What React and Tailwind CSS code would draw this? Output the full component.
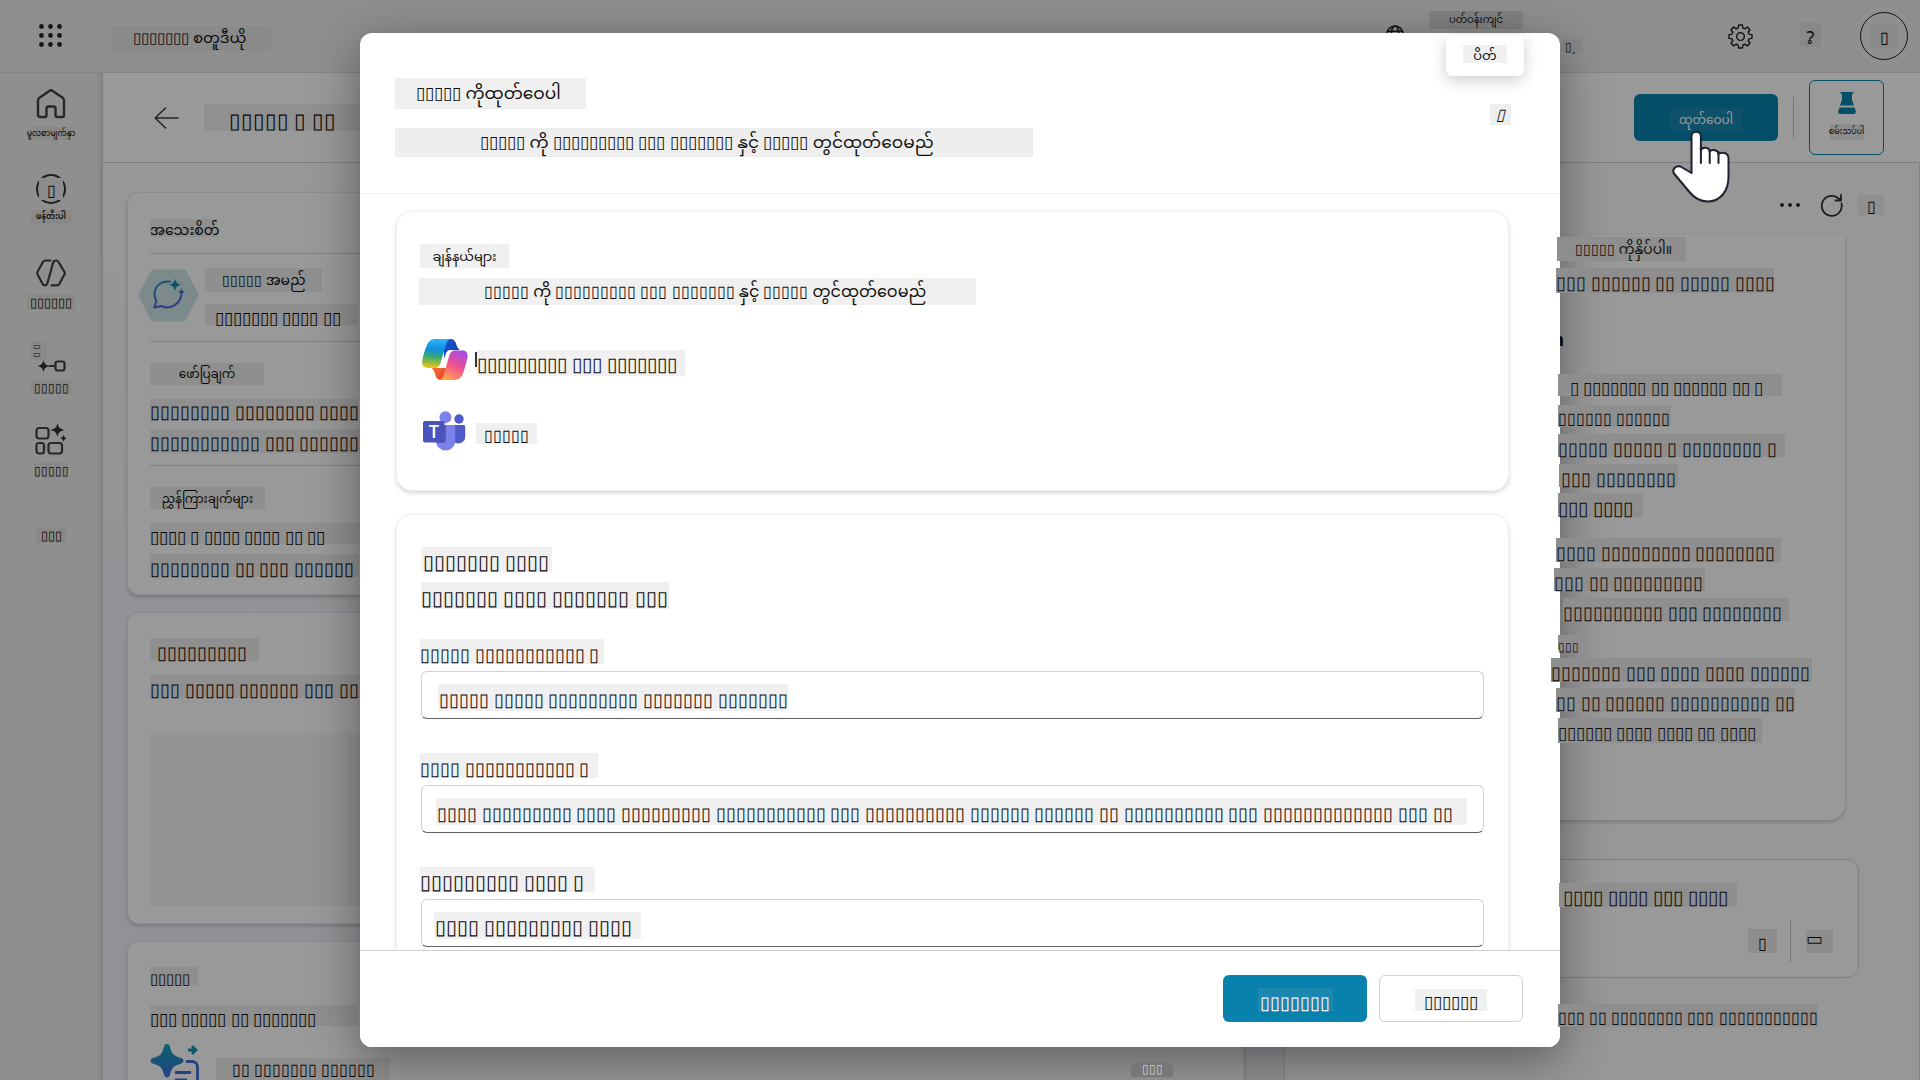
const b = (pattern) =>
  pattern
    .split(" ")
    .map((n) => "▯".repeat(Number(n)))
    .join(" ");

function Strip({ as: Tag = "span", className = "", children, ...rest }) {
  return (
    <Tag className={`flex shrink-0 items-center whitespace-nowrap leading-none ${className}`} {...rest}>
      {children}
    </Tag>
  );
}

/* ---------- icons ---------- */

function WaffleIcon() {
  const c = [2.5, 11.5, 20.5];
  return (
    <svg width="23" height="23" viewBox="0 0 23 23" fill="#242424">
      {c.map((y) => c.map((x) => <circle key={`${x}-${y}`} cx={x} cy={y} r="2.4" />))}
    </svg>
  );
}

function HomeIcon() {
  return (
    <svg width="30" height="30" viewBox="0 0 30 30" fill="none" stroke="#424242" strokeWidth="2.4" strokeLinejoin="round">
      <path d="M2 11.5c0-.9.4-1.8 1.1-2.4L13.6 1.8a2.2 2.2 0 0 1 2.8 0L27 9.1c.7.6 1 1.5 1 2.4V26a2 2 0 0 1-2 2h-4.5a2 2 0 0 1-2-2v-6.5a2 2 0 0 0-2-2h-5a2 2 0 0 0-2 2V26a2 2 0 0 1-2 2H4a2 2 0 0 1-2-2z" />
    </svg>
  );
}

function AgentsIcon() {
  return (
    <svg width="30" height="28" viewBox="0 0 30 28" fill="none" stroke="#424242" strokeWidth="2.2" strokeLinecap="round" strokeLinejoin="round">
      <path d="M14.5 1.5H9.2a2.5 2.5 0 0 0-2.2 1.3L1.5 13a2.5 2.5 0 0 0 0 2.2l5 9.6a2.5 2.5 0 0 0 2.2 1.5c1.3 0 2.3-.8 2.7-2L17 4c.5-1.5 1.5-2.5 3-2.5 1.3 0 2 .5 2.6 1.6L28.5 13c.4.7.4 1.5 0 2.2L23.3 25a2.5 2.5 0 0 1-2.2 1.3h-5.6" />
    </svg>
  );
}

function FlowIcon() {
  return (
    <svg width="29" height="12" viewBox="0 0 29 12">
      <path d="M6.5 0c.8 3.5 2 5 6 6-4 1-5.2 2.5-6 6-.8-3.5-2-5-6-6 4-1 5.2-2.5 6-6z" fill="#333" />
      <path d="M12 6h6" stroke="#424242" strokeWidth="2" />
      <rect x="18.5" y="1.5" width="9" height="9" rx="2" fill="none" stroke="#424242" strokeWidth="2.2" />
    </svg>
  );
}

function ToolsIcon() {
  return (
    <svg width="32" height="32" viewBox="0 0 32 32">
      <g fill="none" stroke="#424242" strokeWidth="2.2">
        <rect x="1.5" y="5" width="12" height="10.5" rx="2.5" />
        <rect x="1.5" y="20" width="7.5" height="10.5" rx="2.5" />
        <rect x="13.5" y="20" width="13.5" height="10.5" rx="2.5" />
      </g>
      <path d="M22.5 0c1 4.5 2.5 6 7 7-4.5 1-6 2.5-7 7-1-4.5-2.5-6-7-7 4.5-1 6-2.5 7-7z" fill="#333" />
      <path d="M28.5 11.5c.5 2.5 1.2 3.2 3.5 3.8-2.3.6-3 1.3-3.5 3.7-.5-2.4-1.2-3.1-3.5-3.7 2.3-.6 3-1.3 3.5-3.8z" fill="#333" />
    </svg>
  );
}

function BackIcon() {
  return (
    <svg width="25" height="22" viewBox="0 0 25 22" fill="none" stroke="#424242" strokeWidth="1.6" strokeLinecap="round" strokeLinejoin="round">
      <path d="M11.5 1 1.2 11l10.3 10M1.2 11H24" />
    </svg>
  );
}

function GlobeIcon() {
  return (
    <svg width="18" height="18" viewBox="0 0 18 18" fill="none" stroke="#242424" strokeWidth="1.6">
      <circle cx="9" cy="9" r="8" />
      <ellipse cx="9" cy="9" rx="3.7" ry="8" />
      <path d="M1.5 6.2h15M1.5 11.8h15" />
    </svg>
  );
}

function GearIcon() {
  return (
    <svg width="25" height="25" viewBox="0 0 24 24" fill="none" stroke="#242424" strokeWidth="1.4" strokeLinejoin="round">
      <circle cx="12" cy="12" r="3.7" />
      <path d="M10.2 1h3.6l.6 2.9 1.7.7L18.6 3l2.5 2.5-1.7 2.4.7 1.8 2.9.5v3.6l-2.9.5-.7 1.8 1.7 2.4-2.5 2.5-2.5-1.6-1.7.7-.6 2.9h-3.6l-.6-2.9-1.7-.7L5.4 21l-2.5-2.5 1.7-2.4-.7-1.8L1 13.8v-3.6l2.9-.5.7-1.8-1.7-2.4L5.4 3l2.5 1.6 1.7-.7z" />
    </svg>
  );
}

function FlaskIcon() {
  return (
    <svg width="18" height="22" viewBox="0 0 18 22" fill="#0882ad">
      <path d="M2.5 0h13v1.5H14V8l2 5.5H2L4 8V1.5H2.5z" />
      <path d="M1.5 15.5h15l1.3 3.5c.5 1.6-.5 3-2 3H2.2c-1.5 0-2.5-1.4-2-3z" />
    </svg>
  );
}

function RefreshIcon() {
  return (
    <svg width="22" height="23" viewBox="0 0 22 23" fill="none" stroke="#333" strokeWidth="1.8" strokeLinecap="round" strokeLinejoin="round">
      <path d="M20.5 9.5A10 10 0 1 1 17 4l2.5 2M20 1v5.5h-5.5" />
    </svg>
  );
}

function AgentBadge() {
  return (
    <svg className="shrink-0" width="61" height="54" viewBox="0 0 61 54">
      <defs>
        <linearGradient id="chat" x1="0" y1="0" x2="0.3" y2="1">
          <stop offset="0" stopColor="#2596be" />
          <stop offset="1" stopColor="#5b5fd6" />
        </linearGradient>
      </defs>
      <path d="M15.5 1.5h30a3 3 0 0 1 2.6 1.5L60 24.5a4 4 0 0 1 0 4L47.8 52a3 3 0 0 1-2.6 1.5H15.5A3 3 0 0 1 12.9 52L1 29a4 4 0 0 1 0-4L12.9 3a3 3 0 0 1 2.6-1.5z" fill="#cfe6ea" />
      <path d="M32 13.5c-9-1-15.5 5-15.5 12.5 0 3 .8 5 1.8 7l-2 6.5 7-1.5c8 4 18.5-1.5 20-11" fill="none" stroke="url(#chat)" strokeWidth="2" strokeLinecap="round" strokeLinejoin="round" />
      <path d="M37 10.5c1 4.2 2 5.3 6.5 6.3-4.5 1-5.5 2.2-6.5 6.4-1-4.2-2-5.4-6.5-6.4 4.5-1 5.5-2.1 6.5-6.3z" fill="#1b87ad" />
      <path d="M43.5 20c.6 2.7 1.3 3.3 3.8 3.9-2.5.6-3.2 1.3-3.8 3.9-.6-2.6-1.3-3.3-3.8-3.9 2.5-.6 3.2-1.2 3.8-3.9z" fill="#3c7bd0" />
    </svg>
  );
}

function KnowledgeIcon() {
  return (
    <svg className="shrink-0" width="50" height="52" viewBox="0 0 50 52">
      <defs>
        <linearGradient id="know" x1="0" y1="0" x2="0" y2="1">
          <stop offset="0" stopColor="#10a3b5" />
          <stop offset="1" stopColor="#3e6fd8" />
        </linearGradient>
      </defs>
      <path d="M17 0c1.5 0 2.4.8 2.9 2.4 2 7.5 3.1 9 11.4 11.6 3 1 3 4.5 0 5.5-8.3 2.6-9.4 4.1-11.4 11.6-.5 1.6-1.4 2.4-2.9 2.4s-2.4-.8-2.9-2.4C12.1 23.6 11 22.1 2.7 19.5c-3-1-3-4.5 0-5.5C11 11.4 12.1 9.9 14.1 2.4 14.6.8 15.5 0 17 0z" fill="url(#know)" />
      <path d="M38 6h8M42 2l4 4-4 4" fill="none" stroke="#1b93b5" strokeWidth="2.8" />
      <path d="M37 17.5h5a5.5 5.5 0 0 1 5.5 5.5v27M26 28.5h14M26 36h10" fill="none" stroke="#3f6fd0" strokeWidth="2.8" strokeLinecap="round" />
    </svg>
  );
}

function CopilotLogo() {
  return (
    <svg className="shrink-0" width="46" height="41" viewBox="0 0 46 41">
      <defs>
        <linearGradient id="cpA" x1="0.4" y1="0" x2="0.3" y2="1">
          <stop offset="0" stopColor="#2bb5f5" />
          <stop offset="0.35" stopColor="#0f8de0" />
          <stop offset="0.62" stopColor="#3bab6e" />
          <stop offset="1" stopColor="#f2c811" />
        </linearGradient>
        <linearGradient id="cpB" x1="0.8" y1="0" x2="0.3" y2="1">
          <stop offset="0" stopColor="#a24be8" />
          <stop offset="0.5" stopColor="#ee5090" />
          <stop offset="1" stopColor="#ffa64d" />
        </linearGradient>
        <linearGradient id="cpC" x1="0" y1="0" x2="1" y2="1">
          <stop offset="0" stopColor="#1a5bd8" />
          <stop offset="1" stopColor="#1338a8" />
        </linearGradient>
        <linearGradient id="cpD" x1="0" y1="0" x2="0.6" y2="1">
          <stop offset="0" stopColor="#f98a3c" />
          <stop offset="1" stopColor="#e8452f" />
        </linearGradient>
      </defs>
      <path d="M22 0h6.5c3 0 4.7 1.8 5.5 4.5.8 3 1.5 5 4 6.5H29c-3 0-4.5 1.5-5.3 4L22 20z" fill="url(#cpC)" />
      <path d="M24.5 41H19c-3 0-4.7-1.8-5.5-4.5-.8-3-1.5-6-4-7.5H18c2.5 0 4-1.5 4.7-4L25 20z" fill="url(#cpD)" />
      <path d="M26.500 11.500h7L28 29h-9.500z" fill="#fff" />
      <path d="M14 0h15c-2.5.3-3.9 2-4.7 4.500L18.800 23c-1 3.7-2.5 6-6.3 6H6c-4.8 0-6.8-3-5.600-8.500C1.700 14.500 3.500 9 5.500 5 7.300 1.500 9.500 0 14 0z" fill="url(#cpA)" />
      <path d="M31 41H17c2.5-.3 3.700-2 4.500-4.500L27 17.500c1-3.700 2.500-6 6.300-6H40c4.800 0 6.400 3 5.200 8.500-1.300 6-3 11-4.700 15.500C38.700 39.500 36 41 31 41z" fill="url(#cpB)" />
    </svg>
  );
}

function TeamsLogo() {
  return (
    <svg className="shrink-0" width="43" height="40" viewBox="0 0 43 40">
      <circle cx="22.5" cy="6.2" r="6" fill="#7b83eb" />
      <circle cx="36" cy="8" r="4.7" fill="#5059c9" />
      <path d="M30 14h10.5c1 0 1.7.7 1.7 1.7v9.8a6.8 6.8 0 0 1-12.2 4.2z" fill="#5059c9" />
      <path d="M13 14h17.5c1 0 1.7.7 1.7 1.7V30a9.6 9.6 0 0 1-19.2 0z" fill="#7b83eb" />
      <path d="M13 14h10v15c0 1.5-1 3-3 3h-7z" fill="#3f4695" opacity="0.6" />
      <rect x="0" y="10" width="21.5" height="21.5" rx="2" fill="#4b53bc" />
      <text x="10.8" y="27" textAnchor="middle" fontSize="18" fontWeight="600" fill="#fff" className="font-['Open_Sans',sans-serif]">T</text>
    </svg>
  );
}

function HandPointer() {
  return (
    <svg className="pointer-events-none absolute left-[38px] top-9 z-20" width="60" height="74" viewBox="0 0 60 74">
      <path
        d="M19.5 43V6.5a4.7 4.7 0 0 1 9.4 0V20c1.5-3.5 8.5-3 8.8 1.5 2.5-2.5 8.6-1.5 8.8 2.5 3-2.5 9.7-1.5 10 4v19c0 14-8 24.5-21 24.5-9 0-14-4.5-18.5-10L2 43.5c-2.5-4 2-8.5 6.5-7z"
        fill="#fff"
        stroke="#1f2130"
        strokeWidth="2"
        strokeLinejoin="round"
      />
      <path d="M28.9 18v15M37.7 20v13M46.5 22v11" stroke="#1f2130" strokeWidth="2" strokeLinecap="round" />
    </svg>
  );
}

/* ---------- background page ---------- */

function TopBar() {
  return (
    <header className="flex h-[73px] shrink-0 items-center border-b border-[#dcdcdc] bg-[#efefef]">
      <button type="button" aria-label="menu" className="ml-[39px] -mt-0.5">
        <WaffleIcon />
      </button>
      <Strip className="ml-[50px] mt-1 h-[25px] w-[159px] bg-[#e6e6e6] pl-[21px] pt-0.5 text-[15px]">
        {b("7")} စတူဒီယို
      </Strip>
      <div className="ml-auto flex h-full items-start">
        <span className="mt-[25px]">
          <GlobeIcon />
        </span>
        <Strip className="ml-[25px] mt-[11px] h-[18px] w-[94px] justify-center bg-[#d8d8d8] pt-0.5 text-[10px]">ပတ်ဝန်းကျင်</Strip>
        <Strip className="ml-[38px] mt-[39px] h-[13px] w-[21px] bg-[#e3e3e3] pl-1 pt-1 text-xs">▯ˏ</Strip>
        <button type="button" aria-label="settings" className="ml-[146px] mt-[24px]">
          <GearIcon />
        </button>
        <Strip as="button" type="button" className="ml-[47px] mt-[23px] h-[24px] w-[21px] justify-center bg-[#e3e3e3] pt-2.5 text-lg">
          ?
        </Strip>
        <button type="button" className="ml-[39px] mr-3 mt-3 flex size-12 items-center justify-center rounded-full border border-[#242424]">
          <Strip className="h-6 w-7 justify-center bg-[#e6e6e6] pt-2 text-base">▯</Strip>
        </button>
      </div>
    </header>
  );
}

function SideRail() {
  const item = "flex flex-col items-center";
  const tag = "justify-center bg-[#e3e3e0]";
  return (
    <nav className="flex w-[103px] shrink-0 flex-col items-center border-r border-[#d4d4d4] bg-[#efefef] pt-4 shadow-[inset_-4px_0_6px_-4px_rgba(0,0,0,0.2)]">
      <a href="#home" className={`${item} h-[85px]`}>
        <HomeIcon />
        <Strip className={`${tag} mt-2 h-[13px] w-[42px] text-[8px]`}>မူလစာမျက်နှာ</Strip>
      </a>
      <a href="#create" className={`${item} h-[85px]`}>
        <span className="flex size-[30px] items-center justify-center rounded-full border-2 border-[#333]">
          <Strip className="h-[22px] w-[24px] justify-center bg-[#e9e9e9] pt-2 text-base">▯</Strip>
        </span>
        <Strip className={`${tag} mt-1.5 h-[14px] w-[41px] text-[8px] font-semibold`}>ဖန်တီးပါ</Strip>
      </a>
      <a href="#agents" className={`${item} h-[82px]`}>
        <AgentsIcon />
        <Strip className={`${tag} mt-[7px] h-[16px] w-[48px] pt-1 text-[13px]`}>{b("6")}</Strip>
      </a>
      <a href="#flows" className={`${item} h-[82px]`}>
        <Strip className="h-[19px] w-4 self-start bg-[#e3e3e0] pl-0.5 text-[8px]">
          ▭<br />▭
        </Strip>
        <FlowIcon />
        <Strip className={`${tag} mt-2 h-[14px] w-[40px] pt-1 text-xs`}>{b("5")}</Strip>
      </a>
      <a href="#tools" className={`${item} h-[105px]`}>
        <ToolsIcon />
        <Strip className={`${tag} mt-2 h-[13px] w-[34px] pt-1 text-xs`}>{b("5")}</Strip>
      </a>
      <button type="button">
        <Strip className={`${tag} h-[15px] w-[30px] pt-1 text-[13px]`}>{b("3")}</Strip>
      </button>
    </nav>
  );
}

function ActionBar() {
  return (
    <div className="flex h-[90px] shrink-0 items-center border-b border-[#d0d0d0] bg-white">
      <button type="button" aria-label="back" className="ml-[51px]">
        <BackIcon />
      </button>
      <Strip as="h1" className="ml-[25px] h-[27px] w-[180px] bg-[#f0f0f0] pl-[25px] pt-3 text-[21px]">
        {b("5 1 2")}
      </Strip>
      <div className="relative ml-auto">
        <button type="button" className="flex h-[47px] w-[144px] items-center justify-center rounded-md bg-[#0882ad] text-xs text-white">
          <Strip className="mt-1 h-[23px] w-[72px] justify-center bg-[#1c88b1] pt-0.5">ထုတ်ဝေပါ</Strip>
        </button>
        <HandPointer />
      </div>
      <span className="mx-[15px] h-[42px] w-px bg-[#c4c4c4]" />
      <button type="button" className="mr-9 flex h-[75px] w-[75px] flex-col items-center rounded-md border border-[#0882ad] pt-[11px]">
        <FlaskIcon />
        <Strip className="mt-2.5 h-[16px] w-[34px] justify-center bg-[#ececec] text-[8px]">စမ်းသပ်ပါ</Strip>
      </button>
    </div>
  );
}

const card = "rounded-xl border border-[#ececf2] bg-white pl-[22px] shadow-[0_2px_4px_rgba(0,0,0,0.2)]";

function Overview() {
  const s = "bg-[#efefef]";
  return (
    <main className="flex min-w-0 flex-1 flex-col gap-[17px] overflow-hidden bg-linear-to-b from-[#fdfdfd] via-[#f3f6fb] to-[#f0f3f8] pl-6 pr-10 pt-[29px]">
      <section className={`${card} h-[403px] shrink-0`}>
        <Strip as="h2" className={`${s} mt-[26px] h-[18px] w-[67px] pt-2 text-[14px]`}>အသေးစိတ်</Strip>
        <hr className="mt-[16px] border-[#d6d6d6]" />
        <div className="-ml-3 mt-[14px] flex h-[54px] items-start">
          <AgentBadge />
          <div className="ml-1.5">
            <Strip className={`${s} h-[24px] w-[117px] pl-[17px] pt-1 text-[14px]`}>{b("5")} အမည်</Strip>
            <Strip className={`${s} mt-3 h-[21px] w-[153px] pl-2.5 pt-3 text-[17px]`}>{b("7 4 2")}</Strip>
          </div>
        </div>
        <hr className="mt-[19px] border-[#d6d6d6]" />
        <Strip as="h3" className={`${s} mt-[21px] h-[22px] w-[114px] justify-center pt-0.5 text-xs`}>ဖော်ပြချက်</Strip>
        <Strip className={`${s} mt-[14px] h-[22px] w-[208px] pt-2 text-[18px]`}>{b("8 8 5")}</Strip>
        <Strip className={`${s} mt-[8px] h-[24px] w-[213px] pt-2 text-[18px]`}>{b("11 3 6")}</Strip>
        <hr className="mt-[12px] border-[#d6d6d6]" />
        <Strip as="h3" className={`${s} mt-[21px] h-[22px] w-[115px] justify-center pt-1 text-xs`}>ညွှန်ကြားချက်များ</Strip>
        <Strip className={`${s} mt-[14px] h-[21px] w-[212px] pt-3 text-[17px]`}>{b("4 1 4 4 2 2")}</Strip>
        <Strip className={`${s} mt-[10px] h-[23px] w-[209px] pt-2.5 text-[18px]`}>{b("8 2 3 6")}</Strip>
      </section>
      <section className={`${card} h-[312px] shrink-0`}>
        <Strip as="h2" className={`${s} mt-[25px] h-[23px] w-[109px] pl-[7px] pt-2.5 text-[18px]`}>{b("9")}</Strip>
        <Strip className={`${s} mt-[14px] h-[23px] w-[210px] pt-2.5 text-[18px]`}>{b("3 5 6 3 3")}</Strip>
        <div className="mr-6 mt-[35px] h-[173px] bg-[#f6f6f6]" />
      </section>
      <section className={`${card} h-[403px] shrink-0`}>
        <Strip as="h2" className={`${s} mt-[25px] h-[19px] w-[48px] pt-2 text-[15px]`}>{b("5")}</Strip>
        <Strip className={`${s} mt-[19px] h-[21px] w-[208px] pt-3 text-[17px]`}>{b("3 5 2 7")}</Strip>
        <div className="mt-[18px] flex items-start">
          <KnowledgeIcon />
          <Strip className={`${s} ml-4 mt-[14px] h-[24px] w-[174px] pl-4 pt-1 text-base`}>{b("2 7 6")}</Strip>
          <Strip className="relative z-20 ml-auto mr-[70px] mt-[19px] h-[14px] w-[42px] justify-center bg-[#777] text-xs text-[#d0d0d0]">{b("3")}</Strip>
        </div>
      </section>
    </main>
  );
}

const CHAT_LINES = [
  { box: "mt-[24px] ml-0.5 h-[22px] w-[224px] pl-3 text-[17px]", text: b("1 7 2 6 2 1") },
  { box: "mt-[9px] ml-0.5 h-[22px] w-[113px] text-base", text: b("6 6") },
  { box: "mt-[7px] ml-0.5 h-[23px] w-[227px] text-[18px]", text: b("5 5 1 8 1") },
  { box: "mt-[7px] ml-[3px] h-[23px] w-[119px] pl-0.5 text-[18px]", text: b("3 8") },
  { box: "mt-[6px] ml-0.5 h-[24px] w-[85px] text-[19px]", text: b("3 4") },
  { box: "mt-[21px] ml-0 h-[24px] w-[225px] text-[18px]", text: b("4 9 8") },
  { box: "mt-[6px] -ml-0.5 h-[23px] w-[151px] text-[18px]", text: b("3 2 9") },
  { box: "mt-[7px] ml-[7px] h-[23px] w-[226px] text-[18px]", text: b("10 3 8") },
  { box: "mt-[14px] ml-0.5 h-[15px] w-[23px] text-xs", text: b("3") },
  { box: "mt-[8px] -ml-[5px] h-[24px] w-[261px] text-[18px]", text: b("7 3 4 4 6") },
  { box: "mt-[6px] ml-0 h-[24px] w-[239px] text-[18px]", text: b("2 2 6 10 2") },
  { box: "mt-[6px] ml-0.5 h-[25px] w-[204px] text-[17px]", text: b("6 4 4 2 4") },
];

function TestPanel() {
  const s = "relative z-20 bg-[#8e8e8e]";
  return (
    <aside className="flex w-[636px] shrink-0 flex-col border-l border-r border-[#dadada] bg-[#fcfcfc]">
      <div className="flex h-[72px] items-center justify-end pr-[35px] pt-3">
        <button type="button" aria-label="more" className="mr-[21px] flex gap-1">
          <span className="size-[4px] rounded-full bg-[#333]" />
          <span className="size-[4px] rounded-full bg-[#333]" />
          <span className="size-[4px] rounded-full bg-[#333]" />
        </button>
        <button type="button" aria-label="refresh" className="mr-[15px]">
          <RefreshIcon />
        </button>
        <Strip as="button" type="button" className="h-[20px] w-[26px] justify-center bg-[#eee] pt-2 text-base">▯</Strip>
      </div>
      <div className="ml-6 mr-[74px] h-[585px] shrink-0 rounded-b-2xl bg-white pl-[247px] pt-0.5 shadow-[0_2px_4px_rgba(0,0,0,0.2)]">
        <Strip className={`${s} ml-px h-[24px] w-[129px] pl-[18px] pt-1 text-[14px]`}>{b("5")} ကိုနှိပ်ပါ။</Strip>
        <Strip className={`${s} mt-[7px] h-[25px] w-[218px] pt-2 text-[18px]`}>{b("3 6 2 5 4")}</Strip>
        <Strip className="mt-[34px] h-[23px] w-2 justify-end pt-1.5 text-lg font-bold">n</Strip>
        {CHAT_LINES.map((line, i) => (
          <Strip key={i} className={`${s} pt-2.5 ${line.box}`}>
            {line.text}
          </Strip>
        ))}
      </div>
      <div className="ml-6 mr-[60px] mt-[39px] h-[119px] shrink-0 rounded-xl border border-[#d4d4d4] bg-white pt-[23px]">
        <Strip className={`${s} ml-[249px] h-[24px] w-[178px] pl-1 pt-2 text-[19px]`}>{b("4 4 3 4")}</Strip>
        <div className="mr-[25px] mt-[13px] flex items-center justify-end">
          <Strip as="button" type="button" className="h-[24px] w-[29px] justify-center bg-[#ececec] pt-2.5 text-base">▯</Strip>
          <span className="ml-[13px] mr-[15px] h-[42px] w-px bg-[#c8c8c8]" />
          <Strip as="button" type="button" className="h-[23px] w-[27px] bg-[#ececec] text-lg">▭</Strip>
        </div>
      </div>
      <Strip className="relative z-20 ml-[273px] mt-[26px] h-[23px] w-[260px] bg-[#8e8e8e] pt-2 text-base">{b("3 2 8 3 11")}</Strip>
    </aside>
  );
}

/* ---------- publish dialog ---------- */

const panel = "rounded-2xl border border-[#f0f0f0] bg-white px-6 shadow-[0_2px_4px_rgba(0,0,0,0.16)]";

function Field({ id, label, labelBox, value, inputBox }) {
  return (
    <div className="h-[114px]">
      <div className="flex h-8 items-start">
        <Strip as="label" htmlFor={id} className={`-ml-px h-[25px] bg-[#f0f0f0] pt-2.5 ${labelBox}`}>
          {label}
        </Strip>
      </div>
      <div className="flex h-[48px] items-center rounded-md border border-[#d1d1d1] border-b-[#616161]">
        <input id={id} defaultValue={value} className={`mt-1 h-[27px] max-w-full bg-[#f0f0f0] pl-px pt-2 leading-none outline-none ${inputBox}`} />
      </div>
    </div>
  );
}

function PublishDialog() {
  const s = "bg-[#f0f0f0]";
  return (
    <div role="dialog" aria-modal="true" className="relative flex h-[calc(100vh-66px)] w-full max-w-[1200px] flex-col rounded-xl bg-white shadow-[0_12px_48px_rgba(0,0,0,0.4)]">
      <div className="flex h-[161px] shrink-0 justify-between border-b border-[#f0f0f0] pl-[35px] pr-[49px]">
        <div className="pt-[45px]">
          <Strip as="h2" className={`${s} h-[31px] w-[191px] pl-[21px] pt-1 text-[17px]`}>{b("5")} ကိုထုတ်ဝေပါ</Strip>
          <Strip as="p" className="mt-[19px] h-[29px] w-[638px] bg-[#eee] pl-[85px] pt-1 text-[17px]">
            {b("5")} ကို {b("9 3 7")} နှင့် {b("5")} တွင်ထုတ်ဝေမည်
          </Strip>
        </div>
        <Strip as="button" type="button" className="mt-[71px] h-[21px] w-[21px] justify-center bg-[#eee] pt-1 text-base italic">▯</Strip>
      </div>
      <div role="tooltip" className="absolute right-9 top-0.5 flex h-[41px] w-[78px] items-center justify-center rounded-md bg-white shadow-[0_4px_16px_rgba(0,0,0,0.2)]">
        <Strip className={`${s} -mt-1 h-[18px] w-[44px] justify-center pt-2 text-[13px]`}>ပိတ်</Strip>
      </div>

      <div className="min-h-0 flex-1 overflow-hidden pl-9 pr-[51px] pt-[17px]">
        <section className={`${panel} h-[280px]`}>
          <Strip as="h3" className={`${s} -ml-px mt-[32px] h-[24px] w-[89px] justify-center pt-1 text-[13px]`}>ချန်နယ်များ</Strip>
          <Strip as="p" className={`${s} -ml-0.5 mt-[10px] h-[27px] w-[557px] pl-[65px] pt-1 text-base`}>
            {b("5")} ကို {b("9 3 7")} နှင့် {b("5")} တွင်ထုတ်ဝေမည်
          </Strip>
          <div className="ml-px mt-[34px] flex h-[41px] items-center">
            <CopilotLogo />
            <span className="ml-[7px] h-[15px] w-0.5 bg-[#333]" />
            <Strip className={`${s} mt-1.5 h-[26px] w-[208px] pt-2 text-[19px]`}>{b("9 3 7")}</Strip>
          </div>
          <div className="ml-0.5 mt-[31px] flex h-[40px] items-center">
            <TeamsLogo />
            <Strip className={`${s} ml-2.5 mt-1 h-[21px] w-[61px] pl-2 pt-2.5 text-base`}>{b("5")}</Strip>
          </div>
        </section>

        <section className={`${panel} mt-[23px] h-[480px]`}>
          <Strip as="h3" className={`${s} mt-[32px] h-[25px] w-[131px] pl-0.5 pt-2.5 text-[20px]`}>{b("7 4")}</Strip>
          <Strip as="p" className={`${s} mb-[30px] mt-[10px] h-[27px] w-[248px] pt-2.5 text-[20px]`}>{b("7 4 7 3")}</Strip>
          <Field id="short" label={b("5 11 1")} labelBox="w-[184px] text-[18px]" value={b("5 5 9 7 7")} inputBox="ml-4 w-[350px] text-[18px]" />
          <Field id="long" label={b("4 11 1")} labelBox="w-[178px] text-[18px]" value={b("4 9 4 9 11 3 10 6 6 2 10 3 13 3 2")} inputBox="ml-3.5 w-[1031px] text-[18px]" />
          <Field id="dev" label={b("9 4 1")} labelBox="w-[175px] text-[20px]" value={b("4 9 4")} inputBox="ml-3 w-[207px] text-[20px]" />
        </section>
      </div>

      <div className="relative flex h-[97px] shrink-0 justify-end gap-3 rounded-b-xl border-t border-[#d1d1d1] bg-white pr-[37px] pt-6">
        <button type="button" className="flex h-[47px] w-[144px] items-center justify-center rounded-md bg-[#0882ad] text-white">
          <Strip className="mt-0.5 h-[23px] w-[75px] justify-center bg-[#1c88b1] pt-2.5 text-[18px]">{b("7")}</Strip>
        </button>
        <button type="button" className="flex h-[47px] w-[144px] items-center justify-center rounded-md border border-[#d1d1d1] bg-white">
          <Strip className="mt-0.5 h-[22px] w-[72px] justify-center bg-[#eff1f1] pt-2.5 text-[17px]">{b("6")}</Strip>
        </button>
      </div>
    </div>
  );
}

export default function App() {
  return (
    <div className="relative flex h-screen flex-col overflow-hidden bg-white font-['Noto_Sans_Myanmar','Noto_Sans',sans-serif] text-[#111]">
      <TopBar />
      <div className="flex min-h-0 flex-1">
        <SideRail />
        <div className="flex min-w-0 flex-1 flex-col">
          <ActionBar />
          <div className="flex min-h-0 flex-1">
            <Overview />
            <TestPanel />
          </div>
        </div>
      </div>
      <div className="absolute inset-0 z-10 flex items-center justify-center bg-black/40">
        <PublishDialog />
      </div>
    </div>
  );
}
